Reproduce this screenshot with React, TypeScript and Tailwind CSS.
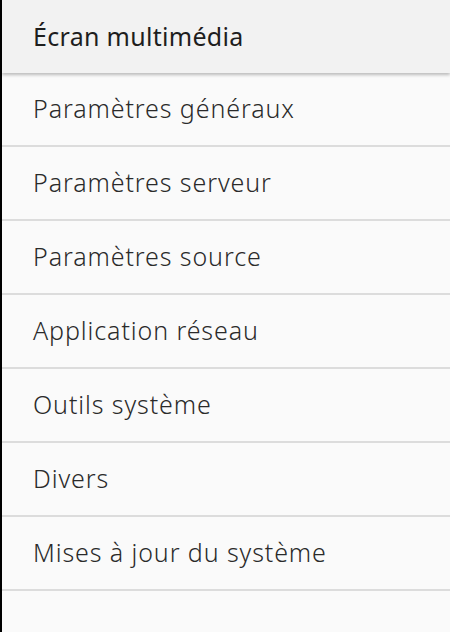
import React from "react";

const items = [
  "Paramètres généraux",
  "Paramètres serveur",
  "Paramètres source",
  "Application réseau",
  "Outils système",
  "Divers",
  "Mises à jour du système",
];

export default function App() {
  return (
    <div
      className="flex h-[632px] w-[450px] bg-black"
      style={{ fontFamily: '"Noto Sans", sans-serif' }}
    >
      <div className="ml-[2px] flex flex-1 flex-col bg-[#fafafa]">
        <div className="relative z-10 flex h-[73px] items-center bg-[#f2f2f2] pl-[31px] text-[25px] font-[370] tracking-[0.3px] text-[#1e1e1e] shadow-[0_2px_3px_rgba(0,0,0,0.25)]">
          Écran multimédia
        </div>
        {items.map((t) => (
          <div
            key={t}
            className="flex h-[74px] items-center border-b-2 border-[#dcdcdc] pl-[31px] text-[25px] font-light tracking-[0.9px] text-[#2a2a2a]"
          >
            {t}
          </div>
        ))}
      </div>
    </div>
  );
}
